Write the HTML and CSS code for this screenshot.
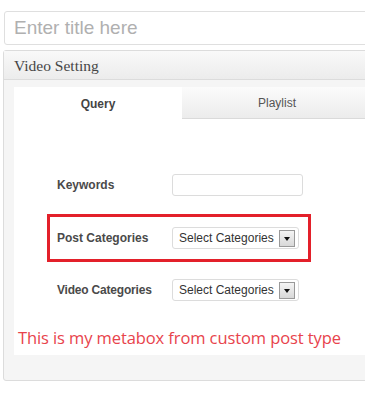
FILE: index.html
```html
<!DOCTYPE html>
<html>
<head>
<meta charset="utf-8">
<link rel="stylesheet" href="styles.css">
</head>
<body>
<div class="page">
  <div class="title-input">Enter title here</div>
  <div class="metabox">
    <div class="mb-header">Video Setting</div>
    <div class="mb-body">
      <div class="panel">
        <div class="tabs">
          <div class="tab active">Query</div>
          <div class="tab">Playlist</div>
        </div>
        <div class="fields">
          <div class="row row-kw">
            <div class="label">Keywords</div>
            <div class="text-input"></div>
          </div>
          <div class="row row-post">
            <div class="label">Post Categories</div>
            <div class="select"><span>Select Categories</span><span class="arrow"></span></div>
          </div>
          <div class="row row-video">
            <div class="label">Video Categories</div>
            <div class="select"><span>Select Categories</span><span class="arrow"></span></div>
          </div>
        </div>
        <div class="note">This is my metabox from custom post type</div>
      </div>
    </div>
  </div>
</div>
</body>
</html>
```
FILE: styles.css
```css
html, body { margin: 0; padding: 0; background: #fff; }
.page { padding: 11px 0 0 0; width: 365px; height: 397px; overflow: hidden; box-sizing: border-box; }
.title-input {
  margin-left: 4px;
  width: 380px;
  height: 34px;
  box-sizing: border-box;
  border: 1px solid #dfdfdf;
  border-radius: 3px;
  padding: 4px 0 0 9px;
  font-family: "Liberation Sans", Arial, sans-serif;
  font-size: 19px;
  color: #b0b0b0;
  line-height: 24px;
}
.metabox {
  margin: 5px 0 0 3px;
  width: 380px;
  height: 331px;
  box-sizing: border-box;
  border: 1px solid #dcdcdc;
  border-radius: 3px;
  background: #f5f5f5;
  display: flex;
  flex-direction: column;
}
.mb-header {
  height: 29px;
  box-sizing: border-box;
  border-bottom: 1px solid #dcdcdc;
  background: linear-gradient(#f9f9f9, #ececec);
  font-family: "Liberation Serif", "Times New Roman", serif;
  font-size: 15.5px;
  color: #464646;
  padding: 6px 0 0 10px;
}
.mb-body { padding: 7px 0 0 10px; }
.panel {
  background: #fff;
  height: 268px;
  display: flex;
  flex-direction: column;
}
.tabs { display: flex; height: 32px; }
.tab {
  font-family: "Liberation Sans", Arial, sans-serif;
  font-size: 12px;
  display: flex;
  align-items: center;
  justify-content: center;
  padding-top: 1px;
  box-sizing: border-box;
}
.tab.active { width: 168px; color: #444; font-weight: bold; background: #fff; }
.tab:not(.active) {
  width: 190px;
  color: #555;
  background: linear-gradient(#fbfbfb, #ececec);
  border-bottom: 1px solid #dadada;
}
.fields { padding: 55px 0 0 43px; display: flex; flex-direction: column; }
.row { display: flex; align-items: center; }
.label {
  width: 115px;
  font-family: "Liberation Sans", Arial, sans-serif;
  font-size: 12px;
  font-weight: bold;
  color: #4a4a4a;
}
.text-input {
  width: 131px;
  height: 22px;
  box-sizing: border-box;
  border: 1px solid #dcdcdc;
  border-radius: 3px;
  background: #fff;
}
.row-post {
  margin: 18px 0 0 -10px;
  padding: 0 0 0 7px;
  width: 264px;
  height: 48px;
  box-sizing: border-box;
  border: 3px solid #e3202a;
}
.row-video { margin-top: 17px; }
.row-video .label { letter-spacing: -0.2px; }
.select {
  width: 127px;
  height: 22px;
  box-sizing: border-box;
  border: 1px solid #dcdcdc;
  border-radius: 3px;
  display: flex;
  align-items: center;
  padding-left: 6px;
  font-family: "Liberation Sans", Arial, sans-serif;
  font-size: 12px;
  color: #333;
}
.arrow {
  margin-left: 5px;
  width: 16px;
  height: 17px;
  flex: none;
  box-sizing: border-box;
  border: 1px solid #999;
  background: linear-gradient(#f4f4f4, #d8d8d8);
  position: relative;
}
.arrow::after {
  content: "";
  position: absolute;
  left: 4px;
  top: 6px;
  border-left: 3px solid transparent;
  border-right: 3px solid transparent;
  border-top: 4px solid #111;
}
.note {
  margin: 25px 0 0 4px;
  font-family: "Open Sans", "Noto Sans", sans-serif;
  font-size: 16.5px;
  color: #e8434c;
  letter-spacing: -0.1px;
}
```
